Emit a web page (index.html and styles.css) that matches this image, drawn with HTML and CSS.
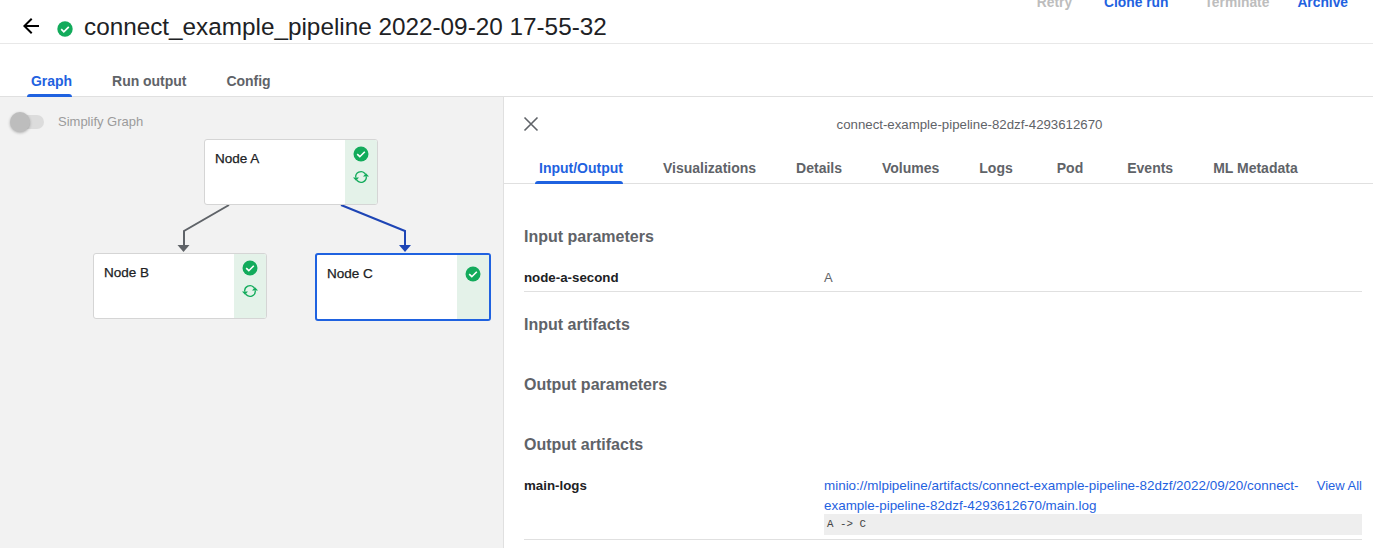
FILE: index.html
```html
<!DOCTYPE html>
<html lang="en">
<head>
<meta charset="utf-8">
<title>connect_example_pipeline</title>
<link rel="stylesheet" href="styles.css">
</head>
<body>
<div class="page">
  <header class="topbar">
    <button class="back" aria-label="Back">
      <svg width="24" height="24" viewBox="0 0 24 24"><path d="M20 11H7.830l5.590-5.590L12 4l-8 8 8 8 1.410-1.410L7.830 13H20z" fill="#000"/></svg>
    </button>
    <svg class="status" width="18" height="18" viewBox="0 0 18 18"><circle cx="9" cy="9" r="7.700" fill="#12ab5b"/><path d="M5.200 9.200l2.600 2.600 5-5" fill="none" stroke="#fff" stroke-width="1.700"/></svg>
    <h1 class="title">connect_example_pipeline 2022-09-20 17-55-32</h1>
    <div class="actions">
      <span class="action off a-retry">Retry</span>
      <span class="action on a-clone">Clone run</span>
      <span class="action off a-term">Terminate</span>
      <span class="action on">Archive</span>
    </div>
  </header>
  <nav class="main-tabs">
    <span class="tab active">Graph</span>
    <span class="tab">Run output</span>
    <span class="tab">Config</span>
  </nav>
  <main class="body">
    <section class="graph">
      <div class="toggle"><span class="track"><span class="thumb"></span></span><span class="toggle-label">Simplify Graph</span></div>
      <svg class="edges" width="503" height="300" viewBox="0 97 503 300">
        <path d="M229 205L184 231V245" fill="none" stroke="#5f6368" stroke-width="2"/>
        <path d="M177.500 245H189.500L183.500 252Z" fill="#5f6368"/>
        <path d="M341 205L405 231V245" fill="none" stroke="#1e45b5" stroke-width="2"/>
        <path d="M399 245H411L405 252Z" fill="#1e45b5"/>
      </svg>
      <div class="node node-a">
        <span class="node-name">Node A</span>
        <span class="strip">
          <svg width="16" height="16" viewBox="0 0 16 16"><circle cx="8" cy="8" r="7.500" fill="#12ab5b"/><path d="M4.200 8.200l2.600 2.500 5-5" fill="none" stroke="#fff" stroke-width="1.600"/></svg>
          <svg class="sync" width="16" height="16" viewBox="0 0 16 16"><path d="M2.700 8.500a5.300 5.300 0 0 1 9-4.300l.6.900M13.300 7.500a5.300 5.300 0 0 1-9 4.300l-.6-.9" fill="none" stroke="#12ab5b" stroke-width="1.300"/><path d="M10 7.600h6l-3-3.400zM0 8.400h6l-3 3.400z" fill="#12ab5b"/></svg>
        </span>
      </div>
      <div class="node node-b">
        <span class="node-name">Node B</span>
        <span class="strip">
          <svg width="16" height="16" viewBox="0 0 16 16"><circle cx="8" cy="8" r="7.500" fill="#12ab5b"/><path d="M4.200 8.200l2.600 2.500 5-5" fill="none" stroke="#fff" stroke-width="1.600"/></svg>
          <svg class="sync" width="16" height="16" viewBox="0 0 16 16"><path d="M2.700 8.500a5.300 5.300 0 0 1 9-4.300l.6.900M13.300 7.500a5.300 5.300 0 0 1-9 4.300l-.6-.9" fill="none" stroke="#12ab5b" stroke-width="1.300"/><path d="M10 7.600h6l-3-3.400zM0 8.400h6l-3 3.400z" fill="#12ab5b"/></svg>
        </span>
      </div>
      <div class="node node-c">
        <span class="node-name">Node C</span>
        <span class="strip">
          <svg width="16" height="16" viewBox="0 0 16 16"><circle cx="8" cy="8" r="7.500" fill="#12ab5b"/><path d="M4.200 8.200l2.600 2.500 5-5" fill="none" stroke="#fff" stroke-width="1.600"/></svg>
        </span>
      </div>
    </section>
    <aside class="panel">
      <div class="panel-head">
        <svg class="close" width="16" height="16" viewBox="0 0 16 16"><path d="M1.500 1.500l13 13M14.500 1.500l-13 13" fill="none" stroke="#5f6368" stroke-width="1.600"/></svg>
        <span class="panel-title">connect-example-pipeline-82dzf-4293612670</span>
      </div>
      <nav class="panel-tabs">
        <span class="tab active">Input/Output</span>
        <span class="tab">Visualizations</span>
        <span class="tab">Details</span>
        <span class="tab">Volumes</span>
        <span class="tab">Logs</span>
        <span class="tab t-wide">Pod</span>
        <span class="tab t-wide">Events</span>
        <span class="tab">ML Metadata</span>
      </nav>
      <div class="content">
        <h2 class="heading h-first">Input parameters</h2>
        <div class="row row-param">
          <span class="key">node-a-second</span>
          <span class="val">A</span>
        </div>
        <h2 class="heading h-ia">Input artifacts</h2>
        <h2 class="heading h-gap">Output parameters</h2>
        <h2 class="heading h-gap">Output artifacts</h2>
        <div class="row row-art">
          <span class="key">main-logs</span>
          <div class="art">
            <div class="art-top">
              <a class="link">minio://mlpipeline/artifacts/connect-example-pipeline-82dzf/2022/09/20/connect-example-pipeline-82dzf-4293612670/main.log</a>
              <a class="link view">View All</a>
            </div>
            <pre class="preview">A -&gt; C</pre>
          </div>
        </div>
      </div>
    </aside>
  </main>
</div>
</body>
</html>
```
FILE: styles.css
```css
* { box-sizing: border-box; }
html, body { margin: 0; height: 100%; overflow: hidden; background: #fff; }
body { font-family: "Liberation Sans", Arial, sans-serif; color: #202124; }
.page { width: 1373px; height: 548px; display: flex; flex-direction: column; overflow: hidden; }

.topbar { height: 44px; flex: none; display: flex; align-items: center; border-bottom: 1px solid #e8e8e8; padding: 10px 25px 0 19px; }
.back { width: 24px; height: 24px; padding: 0; border: 0; background: none; margin-top: -2px; display: block; }
.back svg { display: block; }
.status { margin: 4px 0 0 13px; flex: none; }
.title { margin: 0 0 0 10px; font-size: 24.3px; font-weight: 400; color: #202124; white-space: nowrap; line-height: 28px; }
.actions { margin-left: auto; display: flex; align-self: flex-start; margin-top: -15px; }
.action { font-size: 13.8px; font-weight: 700; line-height: 16px; }
.action.on { color: #1f62e0; }
.action.off { color: #bdbdbd; }
.a-retry { margin-right: 32px; }
.a-clone { margin-right: 36px; }
.a-term { margin-right: 28px; }

.main-tabs { height: 53px; flex: none; display: flex; gap: 40px; padding: 0 0 0 31px; border-bottom: 1px solid #e0e0e0; align-items: flex-end; }
.tab { position: relative; font-size: 14px; font-weight: 700; color: #5f6368; line-height: 16px; padding-bottom: 7px; white-space: nowrap; }
.main-tabs .tab { letter-spacing: -.03px; }
.tab.active { color: #1f62e0; }
.tab.active::after { content: ""; position: absolute; left: -4px; right: 0; bottom: -1px; height: 3px; background: #1f62e0; border-radius: 3px 3px 0 0; }

.body { flex: 1; display: flex; min-height: 0; }
.graph { width: 504px; flex: none; position: relative; background: #f2f2f2; border-right: 1px solid #e0e0e0; }
.toggle { position: absolute; left: 10px; top: 17px; display: flex; align-items: center; }
.track { display: block; position: relative; width: 24px; height: 14px; margin-left: 10px; border-radius: 7px; background: #dcdcdc; }
.thumb { position: absolute; left: -10px; top: -3px; width: 20px; height: 20px; border-radius: 50%; background: #bdbdbd; box-shadow: 0 1px 3px rgba(0,0,0,.3); }
.toggle-label { margin-left: 14px; font-size: 13px; color: #9b9b9b; }
.edges { position: absolute; left: 0; top: 0; }

.node { position: absolute; display: flex; justify-content: space-between; background: #fff; border: 1px solid #d5d5d5; border-radius: 3px; overflow: hidden; }
.node-name { font-size: 13.5px; font-weight: 400; color: #202124; -webkit-text-stroke: .25px #202124; padding: 11px 0 0 10px; line-height: 15px; }
.strip { width: 32px; height: 100%; background: #e4f2e9; display: flex; flex-direction: column; align-items: center; padding-top: 6px; }
.sync { margin-top: 7px; }
.node-a { left: 204px; top: 42px; width: 174px; height: 66px; }
.node-b { left: 93px; top: 156px; width: 174px; height: 66px; }
.node-c { left: 315px; top: 156px; width: 176px; height: 68px; border: 2px solid #1f62e0; }
.node-c .node-name { padding-top: 11px; }
.node-c .strip { width: 32px; padding-top: 11px; }

.panel { flex: 1; min-width: 0; display: flex; flex-direction: column; }
.panel-head { height: 43px; flex: none; position: relative; display: flex; align-items: center; justify-content: center; padding-left: 62px; margin-top: 6px; }
.close { position: absolute; left: 19px; top: 13px; }
.panel-title { font-size: 13.25px; color: #5f6368; }
.panel-tabs { height: 38px; flex: none; display: flex; gap: 40px; padding-left: 35px; border-bottom: 1px solid #e0e0e0; align-items: flex-end; }
.panel-tabs .tab { padding-bottom: 7px; }
.panel-tabs .tab.active::after { left: -4px; }
.t-wide { margin-left: 4px; }

.content { padding: 0 11px 0 20px; }
.heading { margin: 0; font-size: 16px; font-weight: 700; color: #5f6368; line-height: 20px; }
.h-first { margin-top: 43px; }
.h-ia { margin-top: 23px; }
.h-gap { margin-top: 40px; }
.row { display: grid; grid-template-columns: 300px 1fr; border-bottom: 1px solid #e0e0e0; }
.row-param { margin-top: 21px; height: 24px; }
.row-art { margin-top: 21px; padding-bottom: 4px; }
.key { font-size: 13.3px; font-weight: 700; color: #202124; line-height: 20px; }
.val { font-size: 13px; color: #5f6368; line-height: 20px; }
.art-top { display: flex; justify-content: space-between; gap: 15px; }
.link { font-size: 13.43px; line-height: 19.5px; color: #1f62e0; display: block; }
.view { white-space: nowrap; flex: none; font-size: 13px; }
.preview { margin: -1px 0 0; height: 21px; background: #eee; padding: 0 3px; font-family: "Liberation Mono", monospace; font-size: 10.8px; line-height: 21px; color: #444; }
```
